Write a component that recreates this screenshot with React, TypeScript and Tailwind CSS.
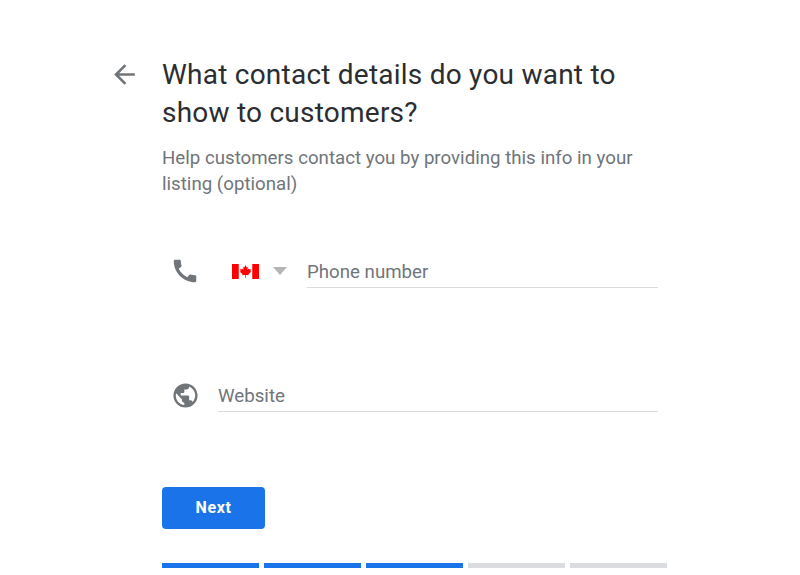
import { useState } from 'react'

const STEPS = [true, true, true, false, false]

// material "call" glyph
function PhoneIcon() {
  return (
    <svg viewBox="0 0 24 24" className="w-[30px] h-[30px] fill-[#70757a]">
      <path d="M20.01 15.38c-1.23 0-2.42-.2-3.53-.56a.977.977 0 0 0-1.01.24l-1.57 1.97c-2.83-1.35-5.48-3.9-6.89-6.83l1.95-1.66c.27-.28.35-.67.24-1.02-.37-1.11-.56-2.3-.56-3.53 0-.54-.45-.99-.99-.99H4.19C3.65 3 3 3.24 3 3.99 3 13.28 10.73 21 20.01 21c.71 0 .99-.63.99-1.18v-3.45c0-.54-.45-.99-.99-.99z" />
    </svg>
  )
}

// material "public" glyph
function GlobeIcon() {
  return (
    <svg viewBox="0 0 24 24" className="w-[29px] h-[29px] fill-[#70757a]">
      <path d="M12 2C6.48 2 2 6.48 2 12s4.48 10 10 10 10-4.48 10-10S17.52 2 12 2zm-1 17.93c-3.95-.49-7-3.85-7-7.93 0-.62.08-1.21.21-1.79L9 15v1c0 1.1.9 2 2 2v1.93zm6.9-2.54c-.26-.81-1-1.39-1.9-1.39h-1v-3c0-.55-.45-1-1-1H8v-2h2c.55 0 1-.45 1-1V7h2c1.1 0 2-.9 2-2v-.41c2.93 1.19 5 4.06 5 7.41 0 2.08-.8 3.97-2.1 5.39z" />
    </svg>
  )
}

function CanadaFlag() {
  return (
    <svg viewBox="0 0 28 14" className="w-[27px] h-[15px]" preserveAspectRatio="none">
      <rect width="28" height="14" fill="#fff" />
      <rect width="7" height="14" fill="#f00" />
      <rect x="21" width="7" height="14" fill="#f00" />
      <path
        fill="#f00"
        transform="translate(-2.1 -1) scale(1.15)"
        d="M14 1.6l1.1 2.1 1-.5-.4 2.6 1.3-1.3.4.8 1.5-.3-.5 1.7.7.4-2.5 2 .3.9-2.6-.3.1 2.4h-.8l.1-2.4-2.6.3.3-.9-2.5-2 .7-.4-.5-1.7 1.5.3.4-.8 1.3 1.3-.4-2.6 1 .5z"
      />
    </svg>
  )
}

export default function App() {
  const [phone, setPhone] = useState('')
  const [website, setWebsite] = useState('')

  return (
    <div className="w-[800px] h-[575px] bg-white overflow-hidden font-['Roboto',sans-serif] flex pl-[109px] pt-[56px]">
      {/* Back arrow */}
      <div className="w-[53px] shrink-0 pt-[3px]">
        <svg viewBox="0 0 24 24" className="w-[31px] h-[31px] fill-[#70757a]">
          <path d="M20 11H7.83l5.59-5.59L12 4l-8 8 8 8 1.41-1.41L7.83 13H20v-2z" />
        </svg>
      </div>

      <div className="w-[505px] flex flex-col">
        <h1 className="text-[28px] leading-[38px] font-normal text-[#2b2d30] tracking-[0.23px]">
          What contact details do you want to show to customers?
        </h1>
        <p className="mt-[13px] w-[480px] text-[18.7px] leading-[26px] text-[#70757a]">
          Help customers contact you by providing this info in your listing (optional)
        </p>

        {/* Phone row */}
        <div className="mt-[57px] flex items-center h-[34px]">
          <div className="w-[46px] flex justify-center">
            <PhoneIcon />
          </div>
          <div className="ml-[24px] w-[75px] flex items-center gap-[14px]">
            <CanadaFlag />
            <div className="w-0 h-0 border-x-[7px] border-x-transparent border-t-[8px] border-t-[#b5b5b5]" />
          </div>
          <div className="w-[351px] h-full border-b border-[#dadce0] flex items-center">
            <input
              value={phone}
              onChange={(e) => setPhone(e.target.value)}
              placeholder="Phone number"
              className="w-full outline-none pt-[3px] text-[18.7px] text-[#202124] placeholder:text-[#70757a]"
            />
          </div>
        </div>

        {/* Website row */}
        <div className="mt-[90px] flex items-center h-[34px]">
          <div className="w-[46px] flex justify-center">
            <GlobeIcon />
          </div>
          <div className="ml-[10px] w-[440px] h-full border-b border-[#dadce0] flex items-center">
            <input
              value={website}
              onChange={(e) => setWebsite(e.target.value)}
              placeholder="Website"
              className="w-full outline-none pt-[3px] text-[18.7px] text-[#202124] placeholder:text-[#70757a]"
            />
          </div>
        </div>

        <button className="mt-[75px] w-[103px] h-[42px] rounded-[4px] bg-[#1a73e8] text-white text-[16px] font-bold tracking-[0.6px]">
          Next
        </button>

        {/* Progress */}
        <div className="mt-[34px] flex gap-[5px]">
          {STEPS.map((done, i) => (
            <div key={i} className={done ? 'w-[97px] h-[5px] bg-[#1a73e8]' : 'w-[97px] h-[5px] bg-[#dadce0]'} />
          ))}
        </div>
      </div>
    </div>
  )
}
